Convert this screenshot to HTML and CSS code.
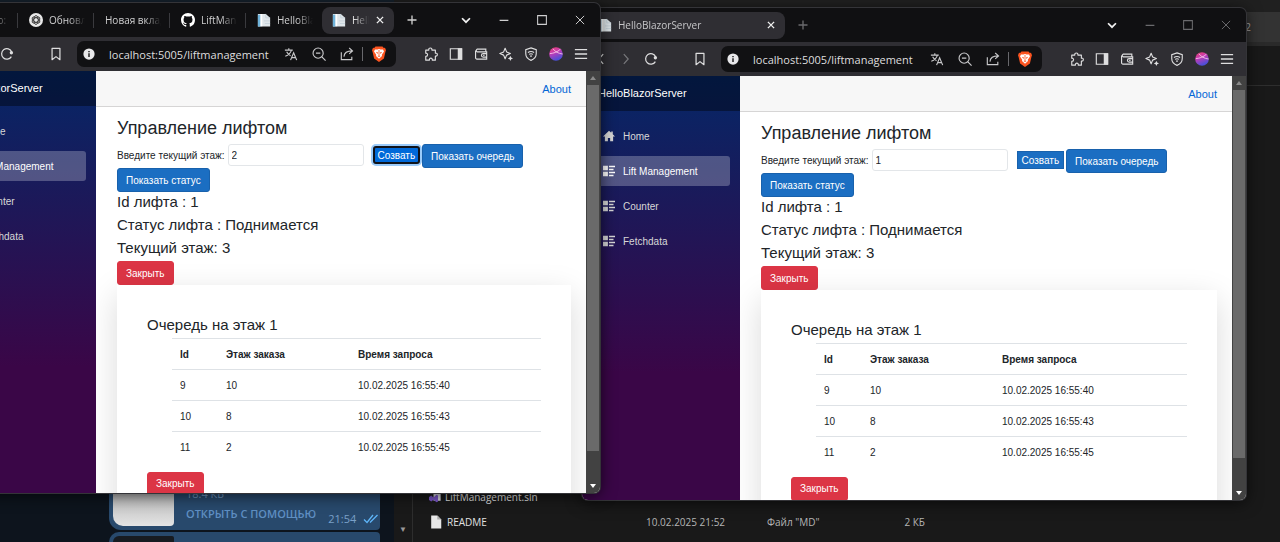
FILE: index.html
```html
<!DOCTYPE html>
<html lang="ru">
<head>
<meta charset="utf-8">
<title>HelloBlazorServer</title>
<link rel="stylesheet" href="styles.css">
</head>
<body>
<svg class="sprite" aria-hidden="true">
  <defs>
    <linearGradient id="ball-fill" x1="0" y1="0" x2="0.4" y2="1"><stop offset="0" stop-color="#f0426a"/><stop offset=".45" stop-color="#c63bb4"/><stop offset="1" stop-color="#4b4fd8"/></linearGradient>
    <symbol id="i-reload" viewBox="0 0 16 16"><path d="M13 11a6 6 0 1 1 .4-5.4" fill="none" stroke="currentColor" stroke-width="1.4"/><circle cx="13" cy="6.600" r="1.900" fill="currentColor"/></symbol>
    <symbol id="i-back" viewBox="0 0 16 16"><path d="M10.500 2.500 5.500 8l5 5.500" fill="none" stroke="currentColor" stroke-width="1.4"/></symbol>
    <symbol id="i-forward" viewBox="0 0 16 16"><path d="M5.500 2.500 10.500 8l-5 5.500" fill="none" stroke="currentColor" stroke-width="1.4"/></symbol>
    <symbol id="i-bookmark" viewBox="0 0 16 16"><path d="M3.500 1.500h9v13L8 11 3.500 14.500z" fill="none" stroke="currentColor" stroke-width="1.4" stroke-linejoin="round"/></symbol>
    <symbol id="i-info" viewBox="0 0 16 16"><circle cx="8" cy="8" r="7.500" fill="#e8e8ea"/><path d="M7 4h2v1.800H7zM7 7h2v5H7z" fill="#222"/></symbol>
    <symbol id="i-translate" viewBox="0 0 16 16"><path d="M1 3.500h9M5.500 1.500v2M8.500 3.500C7.500 7 4.500 9.500 1.500 10.500M3 5.500c1 2 2.500 3.500 4.500 4.500M7.500 15l3.500-8.500L14.500 15M8.800 12.200h4.500" fill="none" stroke="currentColor" stroke-width="1.3"/></symbol>
    <symbol id="i-zoom" viewBox="0 0 16 16"><circle cx="7" cy="7" r="5.800" fill="none" stroke="currentColor" stroke-width="1.300"/><path d="M4.500 7h5M11 11l4.500 4.500" fill="none" stroke="currentColor" stroke-width="1.400"/></symbol>
    <symbol id="i-share" viewBox="0 0 16 16"><path d="M1.500 6v8.500h12V11M4.500 11c.3-4 3-6.500 9.500-6.500M10.500 1.200 14.300 4.500l-3.800 3.300" fill="none" stroke="currentColor" stroke-width="1.300"/></symbol>
    <symbol id="i-brave" viewBox="0 0 16 16"><path d="M4.500.5h7l1.300 1.400 1.200-.1 1 2.500-.6 1.700-1.500 6.500L8 16l-4.900-3.500L1.600 6 1 4.300l1-2.500 1.200.1z" fill="#fb5420"/><path d="M4 3.500h2.500L8 3l1.500.5H12l1 2-2.200 3.300.2 1.200L8 12.800 5 10l.2-1.200L3 5.500z" fill="#fff"/><path d="M4.800 5.800 7 6.600 6.500 8zM11.200 5.800 9 6.600 9.500 8zM6.500 10 8 9.300 9.500 10 8 11zM7.600 4h.8v5h-.8z" fill="#fb5420"/></symbol>
    <symbol id="i-puzzle" viewBox="0 0 16 16"><path d="M2 3.500H5.500c-.6-3.200 4.100-3.200 3.500 0h4V7c3-.6 3 3.900 0 3.300v4.700H9.500c.4-3-3.700-3-3.300 0H2v-4.300C4.800 10.700 4.800 6.800 2 7z" fill="none" stroke="currentColor" stroke-width="1.300" stroke-linejoin="round"/></symbol>
    <symbol id="i-panel" viewBox="0 0 16 16"><path d="M1.500 2h13v12h-13z" fill="none" stroke="currentColor" stroke-width="1.300"/><path d="M10 1.500h5v13h-5z" fill="currentColor"/></symbol>
    <symbol id="i-wallet" viewBox="0 0 16 16"><path d="M13.500 5V2.500h-10a1.700 1.700 0 0 0 0 3H14.500v8.300H3.300A1.500 1.500 0 0 1 1.800 12.300V4M14.500 7.500h-4a2 2 0 0 0 0 4h4M10.500 9.500h1.500" fill="none" stroke="currentColor" stroke-width="1.300"/></symbol>
    <symbol id="i-spark" viewBox="0 0 16 16"><path d="M7 1.500 8.700 5.600 13 7.500 8.700 9.300 7 13.500 5.300 9.300 1 7.500l4.300-1.900z" fill="none" stroke="currentColor" stroke-width="1.300" stroke-linejoin="round"/><path d="m13 10 .9 2.100 2.100.9-2.100.9L13 16l-.9-2.100L10 13l2.100-.9z" fill="currentColor"/></symbol>
    <symbol id="i-shield" viewBox="0 0 16 16"><path d="M8 1 14 3v4.500C14 11.500 11.500 14 8 15.300 4.500 14 2 11.500 2 7.500V3z" fill="none" stroke="currentColor" stroke-width="1.300"/><path d="M4.500 6.300q3.500-2.300 7 0M5.800 8.400q2.200-1.400 4.400 0" fill="none" stroke="currentColor" stroke-width="1.200"/><circle cx="8" cy="10.300" r="1" fill="currentColor"/></symbol>
    <symbol id="i-ball" viewBox="0 0 16 16"><circle cx="8" cy="8" r="7.800" fill="url(#ball-fill)"/><path d="M1 7.500C5 7.500 10 5.500 13 2.500M4.500 2C7 5.500 11 7.500 15.500 8" fill="none" stroke="#f6c6e8" stroke-width="1"/></symbol>
    <symbol id="i-menu" viewBox="0 0 16 16"><path d="M1 3h14M1 8h14M1 13h14" stroke="currentColor" stroke-width="1.500"/></symbol>
    <symbol id="i-doc" viewBox="0 0 16 16"><path d="M1 1h9l5 4.500v10H1z" fill="#dfe6ea"/><path d="M1 2h3v13.500H1z" fill="#6fb4dc"/><path d="M4 1h2v14H4z" fill="#fff"/><path d="M10 1v4.500h5M8 9h7M9 12h6" fill="none" stroke="#bccbd4" stroke-width=".7"/></symbol>
    <symbol id="i-gpt" viewBox="0 0 16 16"><circle cx="8" cy="8" r="8" fill="#e9e9e9"/><g fill="none" stroke="#333" stroke-width="1"><ellipse cx="8" cy="8" rx="2.500" ry="5"/><ellipse cx="8" cy="8" rx="2.500" ry="5" transform="rotate(60 8 8)"/><ellipse cx="8" cy="8" rx="2.500" ry="5" transform="rotate(120 8 8)"/></g></symbol>
    <symbol id="i-github" viewBox="0 0 16 16"><path fill="#fff" d="M8 0C3.580 0 0 3.580 0 8c0 3.540 2.290 6.530 5.470 7.590.4.070.55-.17.55-.38 0-.19-.01-.82-.01-1.490-2.010.37-2.530-.49-2.690-.94-.09-.23-.48-.94-.82-1.130-.28-.15-.68-.52-.01-.53.63-.01 1.080.58 1.230.82.72 1.210 1.870.87 2.330.66.070-.52.28-.87.51-1.070-1.780-.2-3.640-.89-3.640-3.950 0-.87.31-1.590.82-2.150-.08-.2-.36-1.020.08-2.120 0 0 .67-.21 2.200.82.64-.18 1.320-.27 2-.27s1.360.09 2 .27c1.530-1.040 2.200-.82 2.200-.82.44 1.100.16 1.920.08 2.120.51.56.82 1.270.82 2.150 0 3.070-1.870 3.750-3.650 3.950.29.25.54.73.54 1.480 0 1.070-.01 1.930-.01 2.200 0 .21.15.46.55.38A8 8 0 0 0 16 8c0-4.420-3.580-8-8-8z"/></symbol>
    <symbol id="i-x" viewBox="0 0 16 16"><path d="m3 3 10 10M13 3 3 13" stroke="currentColor" stroke-width="2.200"/></symbol>
    <symbol id="i-plus" viewBox="0 0 16 16"><path d="M8 2v12M2 8h12" stroke="currentColor" stroke-width="1.800"/></symbol>
    <symbol id="i-chevron" viewBox="0 0 16 16"><path d="m3.500 6 4.500 4.500L12.500 6" fill="none" stroke="#f2f2f2" stroke-width="2"/></symbol>
    <symbol id="i-min" viewBox="0 0 16 16"><path d="M3 8.500h10" stroke="currentColor" stroke-width="1.300"/></symbol>
    <symbol id="i-max" viewBox="0 0 16 16"><path d="M3 3h10v10H3z" fill="none" stroke="currentColor" stroke-width="1.200"/></symbol>
    <symbol id="i-close" viewBox="0 0 16 16"><path d="m2.500 2.500 11 11M13.500 2.500l-11 11" stroke="currentColor" stroke-width="1.300"/></symbol>
    <symbol id="i-home" viewBox="0 0 16 16"><path d="M8 1 0 8.500h2.500V15h4v-4.500h3V15h4V8.500H16L13 5.600V2h-2v1.800z" fill="currentColor"/></symbol>
    <symbol id="i-list" viewBox="0 0 16 16"><path d="M0 1h6.500v6H0zM0 9h6.500v6H0zM8 1h8v2H8zM8 5h6v2H8zM8 9h8v2H8zM8 13h6v2H8z" fill="currentColor"/></symbol>
    <symbol id="i-page" viewBox="0 0 16 16"><path d="M2.500.5h7L14 5v10.500H2.500z" fill="#e6e6e6"/><path d="M9.500.5V5H14z" fill="#a9a9a9"/></symbol>
    <symbol id="i-sln" viewBox="0 0 16 16"><path d="M6 1h9.500v12H6z" fill="#d7d7de"/><path d="M0 8 3 6l3 2.500L10 5l2 1v8l-2 1-4-3.500L3 14l-3-2z" fill="#7a56c8"/></symbol>
    <symbol id="i-checks" viewBox="0 0 16 10"><path d="m1 5.500 3 3L10 1M7 8.500 14.500 1" fill="none" stroke="#5eb5f7" stroke-width="1.300"/></symbol>
  </defs>
</svg>

<div class="desktop">
  <section class="messenger" aria-label="Чат">
    <div class="bubble">
      <div class="thumb"></div>
      <div class="file">
        <span class="file-size">18.4 КБ</span>
        <a class="file-open" href="#">ОТКРЫТЬ С ПОМОЩЬЮ</a>
      </div>
      <div class="stamp"><time>21:54</time><svg class="checks"><use href="#i-checks"/></svg></div>
    </div>
    <div class="bubble bubble-next"><div class="thumb thumb-dark"></div></div>
  </section>

  <section class="explorer" aria-label="Проводник">
    <div class="explorer-top"></div>
    <div class="explorer-bar"><span>2</span></div>
    <div class="explorer-head"></div>
    <div class="explorer-body">
      <div class="tree-scroll">▼</div>
      <table class="files">
        <tr><td class="f-name"><span class="f-label"><svg class="ic12"><use href="#i-sln"/></svg>LiftManagement.sln</span></td><td class="f-date">10.02.2025 21:50</td><td class="f-type"></td><td class="f-size">2 КБ</td></tr>
        <tr><td class="f-name"><span class="f-label"><svg class="ic14"><use href="#i-page"/></svg>README</span></td><td class="f-date">10.02.2025 21:52</td><td class="f-type">Файл "MD"</td><td class="f-size">2 КБ</td></tr>
      </table>
    </div>
  </section>

  <section class="window window-back">
    <div class="titlebar">
      <div class="tab tab-active tab-wide"><svg class="ic14"><use href="#i-doc"/></svg><span class="tab-text">HelloBlazorServer</span><button class="tab-x" aria-label="Закрыть вкладку"><svg class="ic10"><use href="#i-x"/></svg></button></div>
      <button class="new-tab" aria-label="Новая вкладка"><svg class="ic12"><use href="#i-plus"/></svg></button>
      <div class="controls">
        <button aria-label="Поиск вкладок"><svg class="ic14"><use href="#i-chevron"/></svg></button>
        <button aria-label="Свернуть"><svg class="ic14"><use href="#i-min"/></svg></button>
        <button aria-label="Развернуть"><svg class="ic14"><use href="#i-max"/></svg></button>
        <button aria-label="Закрыть"><svg class="ic12"><use href="#i-close"/></svg></button>
      </div>
    </div>
    <div class="toolbar">
      <button class="nav-btn" aria-label="Назад"><svg class="ic14"><use href="#i-back"/></svg></button>
      <button class="nav-btn dim" aria-label="Вперёд"><svg class="ic14"><use href="#i-forward"/></svg></button>
      <button class="nav-btn" aria-label="Обновить"><svg class="ic14"><use href="#i-reload"/></svg></button>
      <button class="nav-btn mark" aria-label="Закладка"><svg class="ic14"><use href="#i-bookmark"/></svg></button>
      <div class="address">
        <svg class="ic12"><use href="#i-info"/></svg>
        <input class="url" aria-label="Адрес" value="localhost:5005/liftmanagement">
        <svg class="ic14"><use href="#i-translate"/></svg>
        <svg class="ic14"><use href="#i-zoom"/></svg>
        <svg class="ic14"><use href="#i-share"/></svg>
        <span class="divider"></span>
        <svg class="ic16"><use href="#i-brave"/></svg>
      </div>
      <div class="extras">
        <button aria-label="Расширения"><svg class="ic14"><use href="#i-puzzle"/></svg></button>
        <button aria-label="Панель"><svg class="ic14"><use href="#i-panel"/></svg></button>
        <button aria-label="Кошелёк"><svg class="ic14"><use href="#i-wallet"/></svg></button>
        <button aria-label="Leo"><svg class="ic14"><use href="#i-spark"/></svg></button>
        <button aria-label="VPN"><svg class="ic14"><use href="#i-shield"/></svg></button>
        <button aria-label="Профиль"><svg class="ic14"><use href="#i-ball"/></svg></button>
        <button aria-label="Меню"><svg class="ic14"><use href="#i-menu"/></svg></button>
      </div>
    </div>
    <div class="page">
      <aside class="sidebar">
        <div class="brand">HelloBlazorServer</div>
        <nav class="nav">
          <a href="#"><svg class="ic12"><use href="#i-home"/></svg>Home</a>
          <a href="#" class="active"><svg class="ic12"><use href="#i-list"/></svg>Lift Management</a>
          <a href="#"><svg class="ic12"><use href="#i-list"/></svg>Counter</a>
          <a href="#"><svg class="ic12"><use href="#i-list"/></svg>Fetchdata</a>
        </nav>
      </aside>
      <main class="main">
        <div class="top-row"><a href="#">About</a></div>
        <div class="content">
          <h3>Управление лифтом</h3>
          <div class="form-row">
            <label for="floor-b">Введите текущий этаж:</label>
            <input id="floor-b" class="floor" value="1">
            <button class="call">Созвать</button>
            <button class="btn">Показать очередь</button>
          </div>
          <button class="btn">Показать статус</button>
          <h4>Id лифта : 1</h4>
          <h4>Статус лифта : Поднимается</h4>
          <h4>Текущий этаж: 3</h4>
          <button class="btn btn-danger">Закрыть</button>
          <div class="card">
            <h4>Очередь на этаж 1</h4>
            <table class="queue">
              <thead><tr><th class="c-id">Id</th><th class="c-floor">Этаж заказа</th><th>Время запроса</th></tr></thead>
              <tbody>
                <tr><td>9</td><td>10</td><td>10.02.2025 16:55:40</td></tr>
                <tr><td>10</td><td>8</td><td>10.02.2025 16:55:43</td></tr>
                <tr><td>11</td><td>2</td><td>10.02.2025 16:55:45</td></tr>
              </tbody>
            </table>
            <button class="btn btn-danger">Закрыть</button>
          </div>
        </div>
      </main>
      <div class="scrollbar"><span class="arrow up"></span><span class="handle"></span><span class="arrow down"></span></div>
    </div>
  </section>

  <section class="window window-front">
    <div class="titlebar">
      <div class="tab"><span class="tab-text">Вопрос по: ос</span></div>
      <div class="tab"><svg class="ic14"><use href="#i-gpt"/></svg><span class="tab-text">Обновление</span></div>
      <div class="tab tab-plain"><span class="tab-text">Новая вкладка</span></div>
      <div class="tab"><svg class="ic14"><use href="#i-github"/></svg><span class="tab-text">LiftManagement</span></div>
      <div class="tab tab-last"><svg class="ic14"><use href="#i-doc"/></svg><span class="tab-text">HelloBlazorServer</span></div>
      <div class="tab tab-active"><svg class="ic14"><use href="#i-doc"/></svg><span class="tab-text">HelloBlazorServer</span><button class="tab-x" aria-label="Закрыть вкладку"><svg class="ic10"><use href="#i-x"/></svg></button></div>
      <button class="new-tab" aria-label="Новая вкладка"><svg class="ic12"><use href="#i-plus"/></svg></button>
      <div class="controls">
        <button aria-label="Поиск вкладок"><svg class="ic14"><use href="#i-chevron"/></svg></button>
        <button aria-label="Свернуть"><svg class="ic14"><use href="#i-min"/></svg></button>
        <button aria-label="Развернуть"><svg class="ic14"><use href="#i-max"/></svg></button>
        <button aria-label="Закрыть"><svg class="ic12"><use href="#i-close"/></svg></button>
      </div>
    </div>
    <div class="toolbar">
      <button class="nav-btn" aria-label="Назад"><svg class="ic14"><use href="#i-back"/></svg></button>
      <button class="nav-btn dim" aria-label="Вперёд"><svg class="ic14"><use href="#i-forward"/></svg></button>
      <button class="nav-btn" aria-label="Обновить"><svg class="ic14"><use href="#i-reload"/></svg></button>
      <button class="nav-btn mark" aria-label="Закладка"><svg class="ic14"><use href="#i-bookmark"/></svg></button>
      <div class="address">
        <svg class="ic12"><use href="#i-info"/></svg>
        <input class="url" aria-label="Адрес" value="localhost:5005/liftmanagement">
        <svg class="ic14"><use href="#i-translate"/></svg>
        <svg class="ic14"><use href="#i-zoom"/></svg>
        <svg class="ic14"><use href="#i-share"/></svg>
        <span class="divider"></span>
        <svg class="ic16"><use href="#i-brave"/></svg>
      </div>
      <div class="extras">
        <button aria-label="Расширения"><svg class="ic14"><use href="#i-puzzle"/></svg></button>
        <button aria-label="Панель"><svg class="ic14"><use href="#i-panel"/></svg></button>
        <button aria-label="Кошелёк"><svg class="ic14"><use href="#i-wallet"/></svg></button>
        <button aria-label="Leo"><svg class="ic14"><use href="#i-spark"/></svg></button>
        <button aria-label="VPN"><svg class="ic14"><use href="#i-shield"/></svg></button>
        <button aria-label="Профиль"><svg class="ic14"><use href="#i-ball"/></svg></button>
        <button aria-label="Меню"><svg class="ic14"><use href="#i-menu"/></svg></button>
      </div>
    </div>
    <div class="page">
      <aside class="sidebar">
        <div class="brand">HelloBlazorServer</div>
        <nav class="nav">
          <a href="#"><svg class="ic12"><use href="#i-home"/></svg>Home</a>
          <a href="#" class="active"><svg class="ic12"><use href="#i-list"/></svg>Lift Management</a>
          <a href="#"><svg class="ic12"><use href="#i-list"/></svg>Counter</a>
          <a href="#"><svg class="ic12"><use href="#i-list"/></svg>Fetchdata</a>
        </nav>
      </aside>
      <main class="main">
        <div class="top-row"><a href="#">About</a></div>
        <div class="content">
          <h3>Управление лифтом</h3>
          <div class="form-row">
            <label for="floor-a">Введите текущий этаж:</label>
            <input id="floor-a" class="floor" value="2">
            <button class="call call-focus">Созвать</button>
            <button class="btn">Показать очередь</button>
          </div>
          <button class="btn">Показать статус</button>
          <h4>Id лифта : 1</h4>
          <h4>Статус лифта : Поднимается</h4>
          <h4>Текущий этаж: 3</h4>
          <button class="btn btn-danger">Закрыть</button>
          <div class="card">
            <h4>Очередь на этаж 1</h4>
            <table class="queue">
              <thead><tr><th class="c-id">Id</th><th class="c-floor">Этаж заказа</th><th>Время запроса</th></tr></thead>
              <tbody>
                <tr><td>9</td><td>10</td><td>10.02.2025 16:55:40</td></tr>
                <tr><td>10</td><td>8</td><td>10.02.2025 16:55:43</td></tr>
                <tr><td>11</td><td>2</td><td>10.02.2025 16:55:45</td></tr>
              </tbody>
            </table>
            <button class="btn btn-danger">Закрыть</button>
          </div>
        </div>
      </main>
      <div class="scrollbar"><span class="arrow up"></span><span class="handle"></span><span class="arrow down"></span></div>
    </div>
  </section>
</div>
</body>
</html>
```
FILE: styles.css
```css
*, *::before, *::after { box-sizing: border-box; }
body { margin: 0; background: #191919; font-family: "Liberation Sans", Arial, sans-serif; }
button, input { font: inherit; color: inherit; }
button { padding: 0; border: 0; background: none; }
h3, h4 { margin: 0; font-weight: 400; }
a { text-decoration: none; }
svg { display: block; flex: none; }
.sprite { position: absolute; width: 0; height: 0; }
.ic10 { width: 10px; height: 10px; }
.ic12 { width: 12px; height: 12px; }
.ic14 { width: 14px; height: 14px; }
.ic16 { width: 16px; height: 16px; }

.desktop { position: relative; height: 100vh; overflow: hidden; }

/* Messenger behind the browser windows */
.messenger {
  position: absolute; inset: 0 auto 0 0; width: 394px;
  display: flex; flex-direction: column; justify-content: flex-end;
  background: linear-gradient(#17232f 0 10px, #0d141d 10px);
  font-family: "Open Sans", "Noto Sans", sans-serif;
}
.bubble {
  display: flex; gap: 12px; height: 90px; margin: 0 14px 2px 109px; padding: 4px;
  align-items: flex-end; border-radius: 12px 4px 4px 12px; background: #28496c; overflow: hidden;
}
.bubble-next { height: 10px; margin-bottom: 0; align-items: flex-start; border-radius: 10px 4px 0 0; }
.thumb { flex: none; width: 61px; height: 80px; border-radius: 0 0 4px 10px; background: linear-gradient(#aaa 50%, #e4e4e4); }
.thumb-dark { height: 8px; border-radius: 6px 2px 0 0; background: #171b21; }
.file { display: flex; flex-direction: column; flex: 1; padding-bottom: 4px; gap: 4px; line-height: 16px; font-size: 11px; white-space: nowrap; color: #7196bd; }
.file-open { color: #5f8fc3; font-weight: 600; }
.stamp { display: flex; align-items: center; gap: 7px; font-size: 11px; line-height: 14px; color: #7aa0c8; }
.checks { width: 16px; height: 10px; }

/* File explorer behind the browser windows */
.explorer {
  position: absolute; inset: 0 0 0 394px;
  display: flex; flex-direction: column;
  background: #191919; color: #dcdcdc;
  font-family: "Open Sans", "Noto Sans", sans-serif; font-size: 10px;
}
.explorer-top { height: 12px; background: #202020; }
.explorer-bar { height: 30px; padding-right: 29px; text-align: right; line-height: 30px; background: #333; color: #aaa; }
.explorer-head { height: 44px; border-top: 4px solid #2a2a2a; border-bottom: 1px solid #2e2e2e; }
.explorer-body { flex: 1; display: flex; align-items: flex-end; }
.tree-scroll { width: 19px; align-self: stretch; display: flex; align-items: flex-end; justify-content: center; padding-bottom: 8px; border-right: 1px solid #2d2d2d; font-size: 8px; color: #999; }
.files { width: 496px; margin: 0 0 8px 16px; border-collapse: collapse; table-layout: fixed; }
.files td { height: 25px; padding: 0; white-space: nowrap; color: #b5b5b5; }
.f-name { width: 217px; }
.f-label { display: flex; align-items: center; gap: 4px; color: #e0e0e0; }
.f-date { width: 121px; }
.f-type { width: 110px; }
.files .f-size { width: 48px; text-align: right; }

/* Browser windows */
.window {
  position: absolute; display: flex; flex-direction: column; overflow: hidden;
  border-radius: 6px; background: #101012; color: #dededf;
  box-shadow: 0 0 0 1px #343438, 0 2px 16px rgba(0, 0, 0, .7);
}
.window-back { left: 582px; right: 34px; top: 8px; bottom: 42px; }
.window-front { left: -62px; right: 680px; top: 3px; bottom: 49px; }

.titlebar {
  display: flex; align-items: center; flex: none; height: 34px; padding: 0 6px 0 4px;
  font: 10px "Open Sans", "Noto Sans", sans-serif; color: #cfcfd0;
}
.tab { display: flex; align-items: center; gap: 6px; width: 76px; height: 27px; padding: 0 8px 0 11px; border-right: 1px solid transparent; border-radius: 8px; overflow: hidden; }
.tab:not(.tab-active):not(.tab-last) { border-radius: 0; border-image: linear-gradient(transparent 25%, #3a3a3e 25% 75%, transparent 75%) 1; }
.tab-text { flex: 1; min-width: 0; overflow: hidden; white-space: nowrap; -webkit-mask-image: linear-gradient(to left, transparent, #000 16px); mask-image: linear-gradient(to left, transparent, #000 16px); }
.tab-active { width: 72px; padding: 0 8px 0 10px; background: #2f2e33; color: #f0f0f0; }
.tab-wide { width: 199px; padding-left: 12px; }
.tab-x { color: #eee; }
.new-tab { display: flex; justify-content: center; width: 36px; }
.controls { display: flex; gap: 10px; margin-left: auto; }
.controls button { display: flex; align-items: center; justify-content: center; width: 28px; height: 28px; }
.window-back .new-tab, .window-back .controls { color: #6a6a6d; }
.window-back .tab { color: #c6c6c8; }

.toolbar { display: flex; align-items: center; flex: none; height: 34px; padding: 0 7px 0 6px; background: #2f2e33; }
.nav-btn { display: flex; justify-content: center; width: 25px; }
.dim { color: #77777b; }
.mark { width: 26px; margin: 0 8px 0 24px; }
.address { display: flex; flex: 1; align-items: center; gap: 14px; min-width: 0; height: 26px; margin-right: 22px; padding: 0 9px 0 6px; border-radius: 7px; background: #111113; color: #c8c8ca; }
.url { flex: 1; min-width: 0; height: 20px; padding: 0; border: 0; background: none; font: 11px "Open Sans", "Noto Sans", sans-serif; color: #dededf; outline: 0; }
.divider { width: 1px; height: 14px; margin: 0 -6px; background: #68686c; }
.extras { display: flex; }
.extras button { display: flex; justify-content: center; width: 25px; }

/* Application page */
.page { display: flex; flex: 1; min-height: 0; background: #fff; color: #212529; font-size: 10px; }
.sidebar { flex: none; width: 158px; background: linear-gradient(rgb(5, 39, 103), #3a0647 70%); }
.brand { height: 35px; padding-left: 16px; line-height: 35px; font-size: 11px; color: #fff; background: rgba(0, 0, 0, .4); }
.nav { display: flex; flex-direction: column; gap: 5px; padding: 10px; }
.nav a { display: flex; align-items: center; gap: 8px; height: 30px; padding-left: 11px; border-radius: 3px; color: #d7d7d7; }
.nav .active { background: rgba(255, 255, 255, .25); color: #fff; }
.main { flex: 1; min-width: 0; overflow: hidden; }
.top-row { display: flex; align-items: center; justify-content: flex-end; height: 36px; padding-right: 15px; border-bottom: 1px solid #d6d5d5; background: #f7f7f7; font-size: 11px; }
.top-row a { color: #0366d6; }
.content { padding: 10px 15px 0 21px; }
h3 { height: 27px; font-size: 18px; line-height: 22px; }
h4 { font-size: 15px; line-height: 19px; margin-bottom: 4px; }
.form-row { display: flex; align-items: flex-start; height: 24px; }
.form-row label { line-height: 24px; margin-right: 3px; white-space: nowrap; }
.floor { width: 136px; height: 22px; padding: 0 3px; border: 1px solid #e3e6e9; border-radius: 3px; background: #fff; }
.call { height: 18px; margin: 2px 2px 0 9px; padding: 0 4px; color: #fff; background: #1b6ec2; border: 1px solid #1861ac; }
.call-focus { background: #0069d9; border: 2px solid #10131a; border-radius: 3px; padding: 0 3px; box-shadow: 0 0 0 2px #9bcbfa; }
.btn { display: block; height: 24px; padding: 0 8px; border: 1px solid #1861ac; border-radius: 3px; background: #1b6ec2; color: #fff; white-space: nowrap; }
.btn-danger { border-color: #dc3545; background: #dc3545; }
.content > .btn-danger { margin-top: 2px; }
.card { padding: 30px; background: #fff; box-shadow: 0 10px 31px rgba(0, 0, 0, .15); }
.card > .btn { margin-top: 9px; }
.queue { width: calc(100% - 25px); margin-left: 25px; border-collapse: collapse; table-layout: fixed; }
.queue th, .queue td { height: 31px; padding: 0 8px; border-top: 1px solid #dee2e6; text-align: left; white-space: nowrap; }
.c-id { width: 46px; }
.c-floor { width: 132px; }

.scrollbar { display: flex; flex-direction: column; flex: none; width: 14px; background: #424242; }
.arrow { display: flex; align-items: center; justify-content: center; height: 14px; }
.arrow::before { content: ""; border: 3px solid transparent; }
.up::before { border-bottom: 4px solid #8a8a8a; border-top: 0; }
.down::before { border-top: 4px solid #fff; border-bottom: 0; }
.handle { flex: 1; margin: 0 1px 28px; background: #6a6a6a; }
```
